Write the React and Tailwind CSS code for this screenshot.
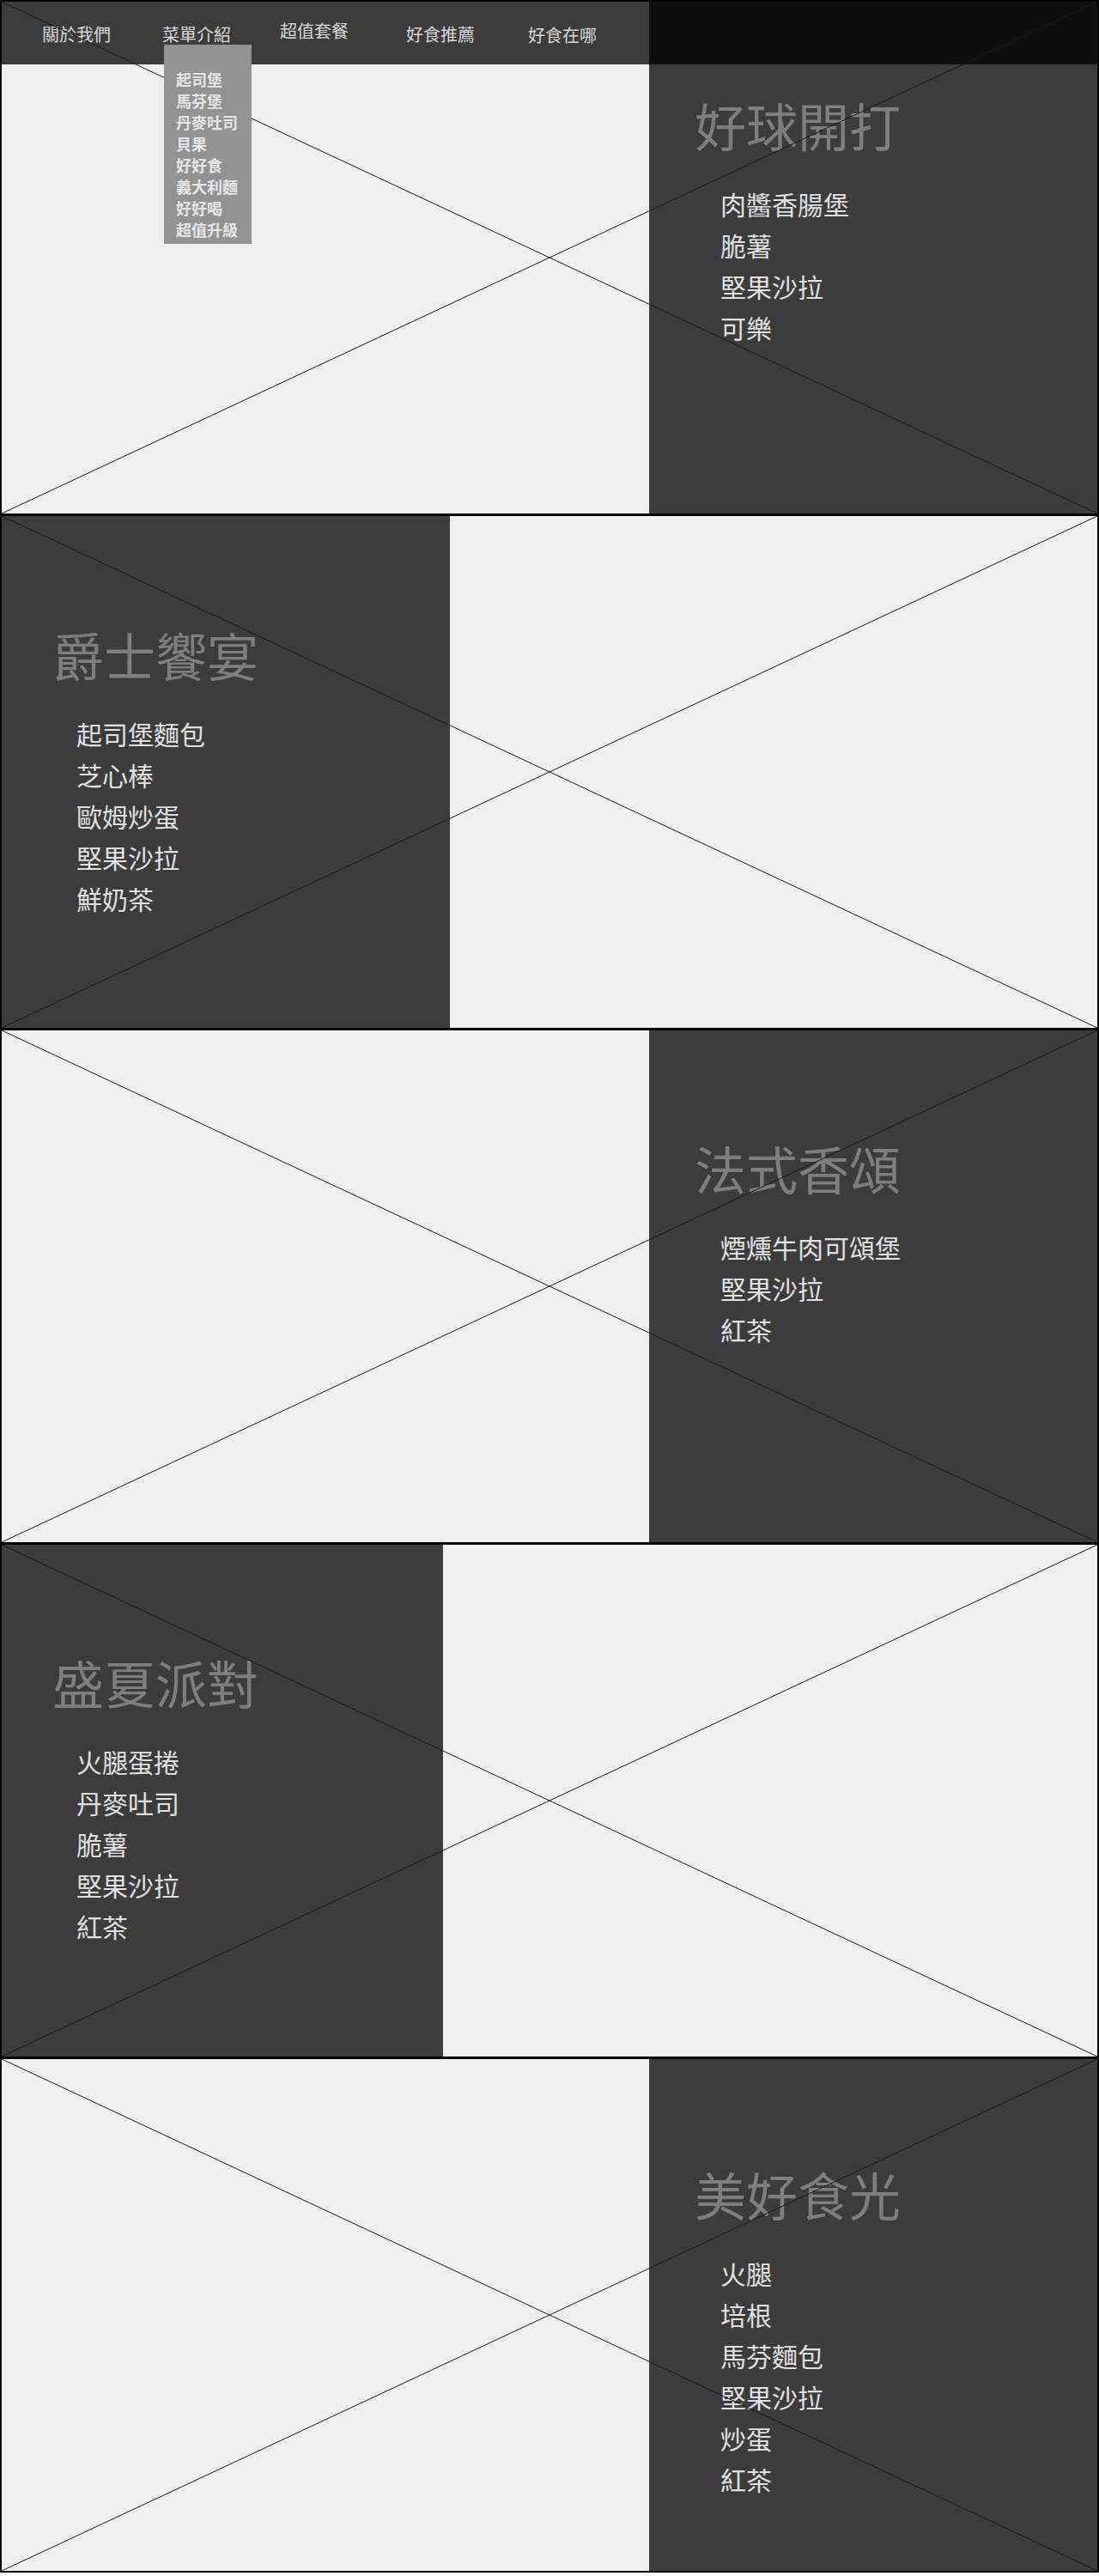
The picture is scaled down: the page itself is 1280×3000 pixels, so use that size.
import React from 'react';

const navItems = [
  { label: '關於我們', cls: 'ml-[47px] mt-[28px]' },
  { label: '菜單介紹', cls: 'ml-[60px] mt-[28px]' },
  { label: '超值套餐', cls: 'ml-[57px] mt-[24px]' },
  { label: '好食推薦', cls: 'ml-[67px] mt-[28px]' },
  { label: '好食在哪', cls: 'ml-[62px] mt-[29px]' },
];

const menuItems = ['起司堡', '馬芬堡', '丹麥吐司', '貝果', '好好食', '義大利麵', '好好喝', '超值升級'];

const sets = [
  {
    title: '好球開打',
    items: ['肉醬香腸堡', '脆薯', '堅果沙拉', '可樂'],
    side: 'right',
    panel: 'w-[522px] pt-[113px] pl-[53px]',
    list: 'pl-[30px]',
  },
  {
    title: '爵士饗宴',
    items: ['起司堡麵包', '芝心棒', '歐姆炒蛋', '堅果沙拉', '鮮奶茶'],
    side: 'left',
    panel: 'w-[522px] pt-[131px] pl-[59px]',
    list: 'pl-[28px]',
  },
  {
    title: '法式香頌',
    items: ['煙燻牛肉可頌堡', '堅果沙拉', '紅茶'],
    side: 'right',
    panel: 'w-[522px] pt-[130px] pl-[53px]',
    list: 'pl-[30px]',
  },
  {
    title: '盛夏派對',
    items: ['火腿蛋捲', '丹麥吐司', '脆薯', '堅果沙拉', '紅茶'],
    side: 'left',
    panel: 'w-[514px] pt-[130px] pl-[59px]',
    list: 'pl-[28px]',
  },
  {
    title: '美好食光',
    items: ['火腿', '培根', '馬芬麵包', '堅果沙拉', '炒蛋', '紅茶'],
    side: 'right',
    panel: 'w-[522px] pt-[127px] pl-[53px]',
    list: 'pl-[30px]',
  },
];

// placeholder cross drawn over the whole block
const Cross = () => (
  <svg
    className="pointer-events-none absolute inset-0 z-10 h-full w-full"
    viewBox="0 0 100 100"
    preserveAspectRatio="none"
  >
    <line x1="0" y1="0" x2="100" y2="100" stroke="#1a1a1a" strokeWidth="1" vectorEffect="non-scaling-stroke" />
    <line x1="0" y1="100" x2="100" y2="0" stroke="#1a1a1a" strokeWidth="1" vectorEffect="non-scaling-stroke" />
  </svg>
);

const Nav = () => (
  <>
    <nav className="absolute inset-x-0 top-0 flex h-[73px] items-start bg-black/75">
      {navItems.map((item) => (
        <a key={item.label} className={`${item.cls} text-[20px] leading-[20px] text-[#d8d8d8]`}>
          {item.label}
        </a>
      ))}
    </nav>
    <ul className="absolute left-[189px] top-[50px] z-20 w-[102px] bg-[#939393] pb-[4px] pl-[14px] pt-[28px]">
      {menuItems.map((m) => (
        <li key={m} className="text-[18px] font-bold leading-[25px] text-[#e6e6e6]">
          {m}
        </li>
      ))}
    </ul>
  </>
);

const Section = ({ set, first }) => (
  <section
    className={`relative flex bg-[#efefef] ${set.side === 'right' ? 'justify-end' : 'justify-start'} ${
      first ? 'h-[596px]' : 'h-[599px] border-t-[3px] border-black'
    }`}
  >
    <div className={`h-full bg-[#3c3c3c] ${set.panel}`}>
      <h2 className="text-[60px] leading-[60px] text-[#7e7e7e]">{set.title}</h2>
      <ul className={`mt-[38px] ${set.list}`}>
        {set.items.map((it) => (
          <li key={it} className="text-[30px] leading-[48px] text-[#e0e0e0]">
            {it}
          </li>
        ))}
      </ul>
    </div>
    {first && <Nav />}
    <Cross />
  </section>
);

export default function App() {
  return (
    <div className="w-[1280px] border-2 border-black font-['Noto_Sans_CJK_TC','Noto_Sans_CJK_SC',sans-serif]">
      {sets.map((s, i) => (
        <Section key={s.title} set={s} first={i === 0} />
      ))}
    </div>
  );
}
